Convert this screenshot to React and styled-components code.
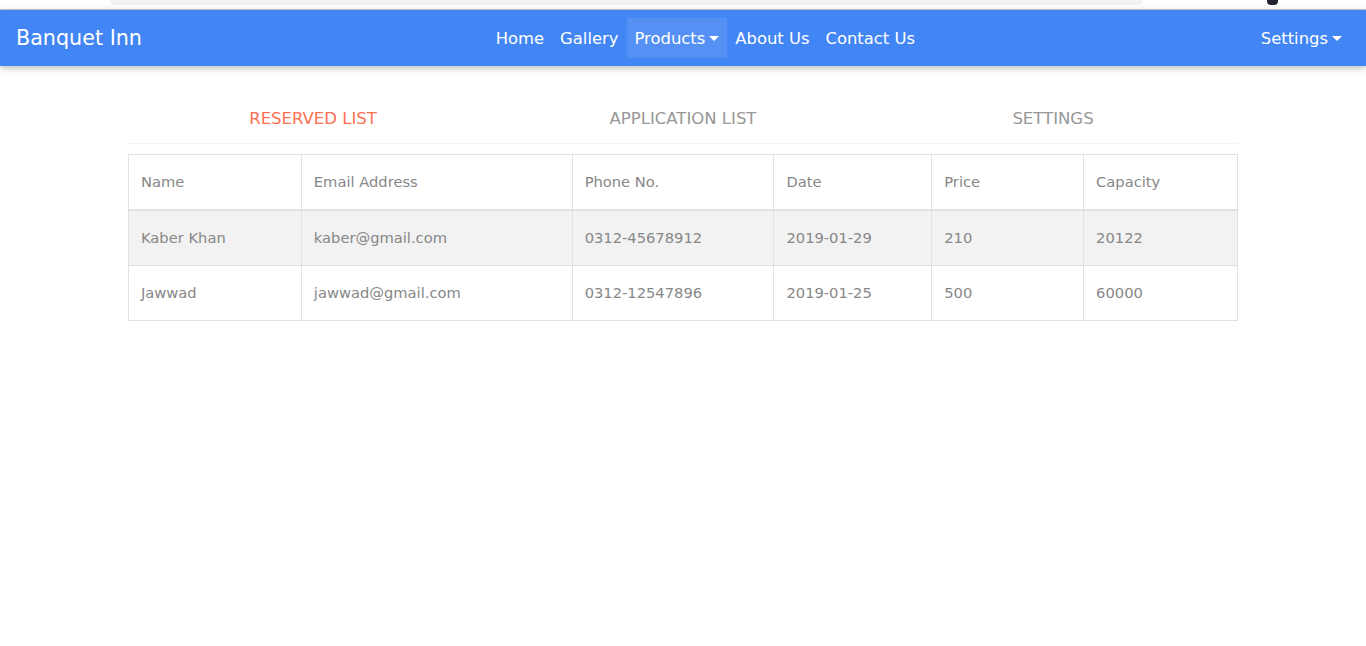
import React, { useState } from 'react';
import styled, { createGlobalStyle } from 'styled-components';

const GlobalStyle = createGlobalStyle`
  * { box-sizing: border-box; }
  body {
    margin: 0;
    background: #fff;
    font-family: "DejaVu Sans", "Noto Sans", sans-serif;
  }
`;

const TopStrip = styled.div`
  height: 10px;
  display: flex;
  align-items: flex-start;
  border-bottom: 1px solid #c9c9c9;
  background: #fff;
`;

const SearchStub = styled.div`
  margin-left: 110px;
  width: 1033px;
  height: 5px;
  background: #f1f3f4;
  border-radius: 0 0 10px 10px;
`;

const Badge = styled.div`
  margin-left: 124px;
  width: 11px;
  height: 5px;
  background: #1f2430;
  border-radius: 0 0 4px 4px;
`;

const Navbar = styled.nav`
  display: flex;
  align-items: center;
  height: 56px;
  padding: 8px 16px;
  background: #4285f4;
  box-shadow: 0 2px 5px rgba(0, 0, 0, 0.16), 0 2px 10px rgba(0, 0, 0, 0.12);
  position: relative;
  z-index: 1;
`;

const Brand = styled.a`
  color: #fff;
  font-size: 20.7px;
  margin-right: 16px;
  white-space: nowrap;
`;

const NavList = styled.div`
  display: flex;
  margin: 0 auto;
`;

const NavLink = styled.a`
  display: flex;
  align-items: center;
  height: 40px;
  padding: 0 8px;
  color: #fff;
  font-size: 16.4px;
  white-space: nowrap;
  background: ${(p) => (p.$active ? 'rgba(255, 255, 255, 0.1)' : 'transparent')};
  cursor: pointer;

  ${(p) =>
    p.$caret &&
    `
    &::after {
      content: '';
      display: inline-block;
      margin-left: 4px;
      border-top: 5px solid #fff;
      border-left: 5px solid transparent;
      border-right: 5px solid transparent;
    }
  `}
`;

const Container = styled.main`
  width: 1110px;
  margin: 0 auto;
`;

const Tabs = styled.div`
  display: grid;
  grid-template-columns: repeat(3, 1fr);
  margin-top: 29px;
  border-bottom: 1px solid #f4f4f4;
`;

const Tab = styled.button`
  border: none;
  background: none;
  padding: 0 12px 2px;
  height: 48px;
  font-family: inherit;
  font-size: 16.5px;
  text-transform: uppercase;
  color: ${(p) => (p.$active ? '#fd7052' : '#979797')};
  cursor: pointer;
`;

const Table = styled.table`
  width: 100%;
  margin-top: 10px;
  border-collapse: collapse;
  font-size: 14.7px;
  color: #878787;
`;

const Th = styled.th`
  width: ${(p) => p.$w}px;
  text-align: left;
  font-weight: normal;
  padding: 16px 12px;
  line-height: 22px;
  border: 1px solid #dee2e6;
  border-bottom-width: 2px;
`;

const Tr = styled.tr`
  background: ${(p) => (p.$striped ? '#f2f2f2' : '#fff')};
`;

const Td = styled.td`
  padding: 16px 12px;
  line-height: 22px;
  border: 1px solid #dee2e6;
`;

const columns = [
  { label: 'Name', w: 173 },
  { label: 'Email Address', w: 271 },
  { label: 'Phone No.', w: 202 },
  { label: 'Date', w: 158 },
  { label: 'Price', w: 152 },
  { label: 'Capacity', w: 154 },
];

const rows = [
  ['Kaber Khan', 'kaber@gmail.com', '0312-45678912', '2019-01-29', '210', '20122'],
  ['Jawwad', 'jawwad@gmail.com', '0312-12547896', '2019-01-25', '500', '60000'],
];

const tabs = ['Reserved List', 'Application List', 'Settings'];

const App = () => {
  const [tab, setTab] = useState(0);

  return (
    <>
      <GlobalStyle />
      <TopStrip>
        <SearchStub />
        <Badge />
      </TopStrip>
      <Navbar>
        <Brand>Banquet Inn</Brand>
        <NavList>
          <NavLink>Home</NavLink>
          <NavLink>Gallery</NavLink>
          <NavLink $active $caret>Products</NavLink>
          <NavLink>About Us</NavLink>
          <NavLink>Contact Us</NavLink>
        </NavList>
        <NavLink $caret>Settings</NavLink>
      </Navbar>
      <Container>
        <Tabs>
          {tabs.map((t, i) => (
            <Tab key={t} $active={tab === i} onClick={() => setTab(i)}>
              {t}
            </Tab>
          ))}
        </Tabs>
        <Table>
          <thead>
            <tr>
              {columns.map((c) => (
                <Th key={c.label} $w={c.w}>{c.label}</Th>
              ))}
            </tr>
          </thead>
          <tbody>
            {rows.map((r, i) => (
              <Tr key={r[1]} $striped={i % 2 === 0}>
                {r.map((cell, j) => (
                  <Td key={j}>{cell}</Td>
                ))}
              </Tr>
            ))}
          </tbody>
        </Table>
      </Container>
    </>
  );
};

export default App;
